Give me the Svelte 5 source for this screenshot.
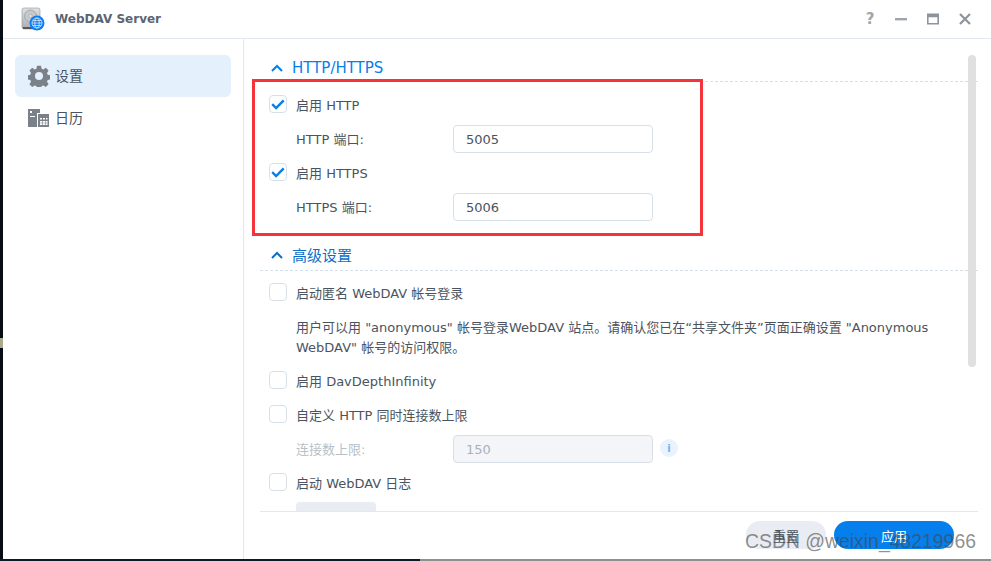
<script>
  const sideItems = [
    { id: 'settings', label: '设置', active: true },
    { id: 'calendar', label: '日历', active: false }
  ];
</script>

<div class="screen">
  <div class="desktop-edge"></div>
  <div class="window">
    <header class="titlebar">
      <svg class="app-icon" viewBox="0 0 24 24" width="24" height="24">
        <defs>
          <linearGradient id="drive" x1="0" y1="0" x2="0" y2="1">
            <stop offset="0" stop-color="#dfe1e2" />
            <stop offset="1" stop-color="#a9adaf" />
          </linearGradient>
        </defs>
        <rect x="1" y="1" width="18" height="21" rx="2" fill="url(#drive)" stroke="#8d9194" stroke-width="0.6" />
        <circle cx="9.5" cy="9" r="6" fill="#c6c9cb" stroke="#96999c" stroke-width="0.7" />
        <circle cx="9.5" cy="9" r="1.6" fill="#eceded" stroke="#8d9194" stroke-width="0.5" />
        <rect x="2" y="20" width="15" height="2" fill="#55595c" />
        <circle cx="16" cy="16" r="7.5" fill="#0d7df2" />
        <g fill="none" stroke="#cfe6ff" stroke-width="0.8">
          <circle cx="16" cy="16" r="5" />
          <ellipse cx="16" cy="16" rx="2.2" ry="5" />
          <path d="M11 16h10M11.8 13.5h8.4M11.8 18.5h8.4" />
        </g>
      </svg>
      <span class="app-title">WebDAV Server</span>
      <div class="win-actions">
        <span class="help">?</span>
        <svg viewBox="0 0 14 14" width="14" height="14"><rect x="1" y="6" width="12" height="2.4" fill="#a0a5ab" /></svg>
        <svg viewBox="0 0 14 14" width="14" height="14"><path fill-rule="evenodd" d="M1 1.5h12v11H1zM2.6 5.2v5.8h8.8V5.2z" fill="#8e949b" /></svg>
        <svg viewBox="0 0 14 14" width="14" height="14"><path d="M2 2l10 10M12 2L2 12" stroke="#8e949b" stroke-width="2.2" fill="none" /></svg>
      </div>
    </header>

    <div class="body">
      <nav class="sidebar">
        {#each sideItems as item}
          <div class="side-item" class:active={item.active}>
            {#if item.id === 'settings'}
              <svg viewBox="0 0 22 22" width="22" height="22">
                <path fill="#7b8188" fill-rule="evenodd" d="M9 .8h4l.6 2.9 1.7.7 2.5-1.6 2.8 2.8-1.6 2.5.7 1.7 2.9.6v4l-2.9.6-.7 1.7 1.6 2.5-2.8 2.8-2.5-1.6-1.7.7-.6 2.9H9l-.6-2.9-1.7-.7-2.5 1.6-2.8-2.8 1.6-2.5-.7-1.7-2.9-.6v-4l2.9-.6.7-1.7-1.6-2.5 2.8-2.8 2.5 1.6 1.7-.7zM11 7a4 4 0 1 0 0 8 4 4 0 0 0 0-8z" />
              </svg>
            {:else}
              <svg viewBox="0 0 22 18" width="22" height="18">
                <path fill="#7b8188" fill-rule="evenodd" d="M0 0h12v4H9v14H0zM2 2v2h2V2zM2 7v1h5V7z" />
                <path fill="#7b8188" fill-rule="evenodd" d="M10 5h11v13H10zM12 9v1.6h2V9zM15 9v1.6h2V9zM18 9v1.6h1.5V9zM12 12v4h7.5v-4z" />
                <path fill="#7b8188" d="M14.4 12h.6v4h-.6zM17.4 12h.6v4h-.6zM12 13.7h7.5v.6H12z" />
              </svg>
            {/if}
            <span>{item.label}</span>
          </div>
        {/each}
      </nav>

      <main class="content">
        <div class="scroll">
          <div class="section-head first">
            <svg viewBox="0 0 12 8" width="12" height="8"><path d="M1 7l5-5 5 5" fill="none" stroke="#057feb" stroke-width="2" /></svg>
            <span>HTTP/HTTPS</span>
          </div>
          <div class="row first-row"><span class="check on"><svg viewBox="1 1 16 16" width="16" height="16"><path d="M3.2 9.2l3.9 3.9 7.6-7.8" fill="none" stroke="#057feb" stroke-width="2.4" /></svg></span>启用 HTTP</div>
          <div class="row field"><label for="http-port">HTTP 端口:</label><input id="http-port" value="5005" /></div>
          <div class="row"><span class="check on"><svg viewBox="1 1 16 16" width="16" height="16"><path d="M3.2 9.2l3.9 3.9 7.6-7.8" fill="none" stroke="#057feb" stroke-width="2.4" /></svg></span>启用 HTTPS</div>
          <div class="row field"><label for="https-port">HTTPS 端口:</label><input id="https-port" value="5006" /></div>

          <div class="section-head second">
            <svg viewBox="0 0 12 8" width="12" height="8"><path d="M1 7l5-5 5 5" fill="none" stroke="#0a6fc9" stroke-width="2" /></svg>
            <span>高级设置</span>
          </div>
          <div class="row after-second"><span class="check"></span>启动匿名 WebDAV 帐号登录</div>
          <p class="note">用户可以用 "anonymous" 帐号登录WebDAV 站点。请确认您已在“共享文件夹”页面正确设置 "Anonymous WebDAV" 帐号的访问权限。</p>
          <div class="row"><span class="check"></span>启用 DavDepthInfinity</div>
          <div class="row"><span class="check"></span>自定义 HTTP 同时连接数上限</div>
          <div class="row field disabled">
            <label for="max-conn">连接数上限:</label><input id="max-conn" value="150" disabled />
            <span class="info">i</span>
          </div>
          <div class="row"><span class="check"></span>启动 WebDAV 日志</div>
          <div class="log-btn"></div>
        </div>
        <footer class="footer">
          <button class="btn reset">重置</button>
          <button class="btn apply">应用</button>
        </footer>
      </main>
      <div class="thumb"></div>
    </div>
  </div>
  <div class="desktop-bottom"></div>

  <div class="annotation"></div>
  <div class="watermark">CSDN @weixin_48219966</div>
</div>

<style>
  :global(body) {
    margin: 0;
    background: #fff;
  }

  .screen {
    position: relative;
    width: 991px;
    height: 561px;
    overflow: hidden;
    display: grid;
    grid-template-columns: 3px 1fr;
    grid-template-rows: 1fr 2px;
    font-family: "DejaVu Sans", "Noto Sans CJK SC", sans-serif;
    font-size: 13px;
    color: #4a5460;
  }

  .desktop-edge {
    background: linear-gradient(to bottom, #060d16 338px, #a9a98c 338px, #a9a98c 348px, #060d16 348px);
  }

  .desktop-bottom {
    grid-column: 1 / 3;
    background: linear-gradient(to right, #0b1a26 0, #0b1a26 420px, #8f8f8f 420px);
  }

  .window {
    display: flex;
    flex-direction: column;
    min-height: 0;
    background: #fff;
  }

  .titlebar {
    flex: 0 0 38px;
    display: flex;
    align-items: center;
    border-bottom: 1px solid #e3e8ee;
    padding: 0 19px 0 18px;
    gap: 10px;
  }

  .app-title {
    font-weight: bold;
    font-size: 12px;
    color: #5b6572;
  }

  .win-actions {
    margin-left: auto;
    display: flex;
    align-items: center;
    gap: 18px;
  }

  .help {
    font-size: 15px;
    font-weight: bold;
    color: #a0a5ab;
    width: 12px;
    text-align: center;
  }

  .body {
    position: relative;
    flex: 1;
    display: flex;
    min-height: 0;
  }

  .sidebar {
    flex: 0 0 240px;
    box-sizing: border-box;
    border-right: 1px solid #e3e8ee;
    padding: 16px 12px 0;
  }

  .side-item {
    height: 42px;
    display: flex;
    align-items: center;
    gap: 5px;
    padding-left: 13px;
    width: 216px;
    box-sizing: border-box;
    border-radius: 6px;
    font-size: 14px;
  }

  .side-item span {
    margin-top: -2px;
  }

  .side-item.active {
    background: #e4f0fb;
  }

  .content {
    flex: 1;
    min-width: 0;
    display: flex;
    flex-direction: column;
    padding: 0 13px 0 16px;
  }

  .scroll {
    flex: 1;
    min-height: 0;
    overflow: hidden;
    padding-top: 13px;
  }

  .section-head {
    height: 30px;
    box-sizing: border-box;
    display: flex;
    align-items: center;
    gap: 9px;
    padding-left: 11px;
    border-bottom: 1px dashed #d7e0e9;
    font-size: 15px;
    color: #057feb;
  }

  .section-head.first {
    padding-top: 2px;
  }

  .section-head.second {
    height: 31px;
    margin-top: 17px;
    padding-bottom: 1px;
    color: #0a6fc9;
  }

  .row {
    height: 34px;
    display: flex;
    align-items: center;
    padding-left: 9px;
  }

  .first-row {
    margin-top: 5px;
  }

  .after-second {
    margin-top: 4px;
  }

  .check {
    flex: 0 0 18px;
    height: 18px;
    box-sizing: border-box;
    border: 1px solid #d7e0e9;
    border-radius: 4px;
    margin-right: 9px;
    display: flex;
    align-items: center;
    justify-content: center;
  }

  .check svg {
    flex: none;
  }

  .field {
    padding-left: 36px;
  }

  .field label {
    flex: 0 0 157px;
  }

  .field input {
    width: 200px;
    height: 28px;
    margin-top: 2px;
    box-sizing: border-box;
    border: 1px solid #d7e0e9;
    border-radius: 4px;
    padding: 0 12px;
    font: inherit;
    color: #4a5460;
    outline: none;
    background: #fff;
  }

  .field.disabled label {
    color: #b9bfc6;
  }

  .field.disabled input {
    background: #f3f5f9;
    color: #aab1ba;
  }

  .info {
    margin-left: 7px;
    width: 18px;
    height: 18px;
    border-radius: 50%;
    background: #e8f3fd;
    color: #6db3ee;
    font-size: 10px;
    font-weight: bold;
    display: flex;
    align-items: center;
    justify-content: center;
  }

  .note {
    margin: 9px 40px 5px 36px;
    line-height: 20px;
  }

  .log-btn {
    margin: 3px 0 0 36px;
    width: 80px;
    height: 28px;
    border-radius: 4px;
    background: #e9edf3;
  }

  .footer {
    flex: 0 0 48px;
    box-sizing: border-box;
    border-top: 1px solid #e3e8ee;
    padding: 9px 24px 0 0;
    display: flex;
    justify-content: flex-end;
    align-items: flex-start;
    gap: 8px;
  }

  .btn {
    height: 28px;
    border: 0;
    border-radius: 14px;
    font: inherit;
    padding: 0;
  }

  .reset {
    width: 80px;
    background: #e9edf3;
    color: #4a5460;
  }

  .apply {
    width: 120px;
    background: #057feb;
    color: #fff;
  }

  .thumb {
    position: absolute;
    top: 16px;
    left: 965px;
    width: 8px;
    height: 312px;
    border-radius: 4px;
    background: #e0e0e0;
  }

  /* red box drawn over the screenshot */
  .annotation {
    position: absolute;
    left: 252px;
    top: 79px;
    width: 451px;
    height: 157px;
    box-sizing: border-box;
    border: 3px solid #f5333a;
  }

  .watermark {
    position: absolute;
    left: 745px;
    top: 530px;
    font-family: "Liberation Sans", sans-serif;
    font-size: 19.4px;
    color: rgba(70, 70, 70, 0.62);
    white-space: nowrap;
  }
</style>
